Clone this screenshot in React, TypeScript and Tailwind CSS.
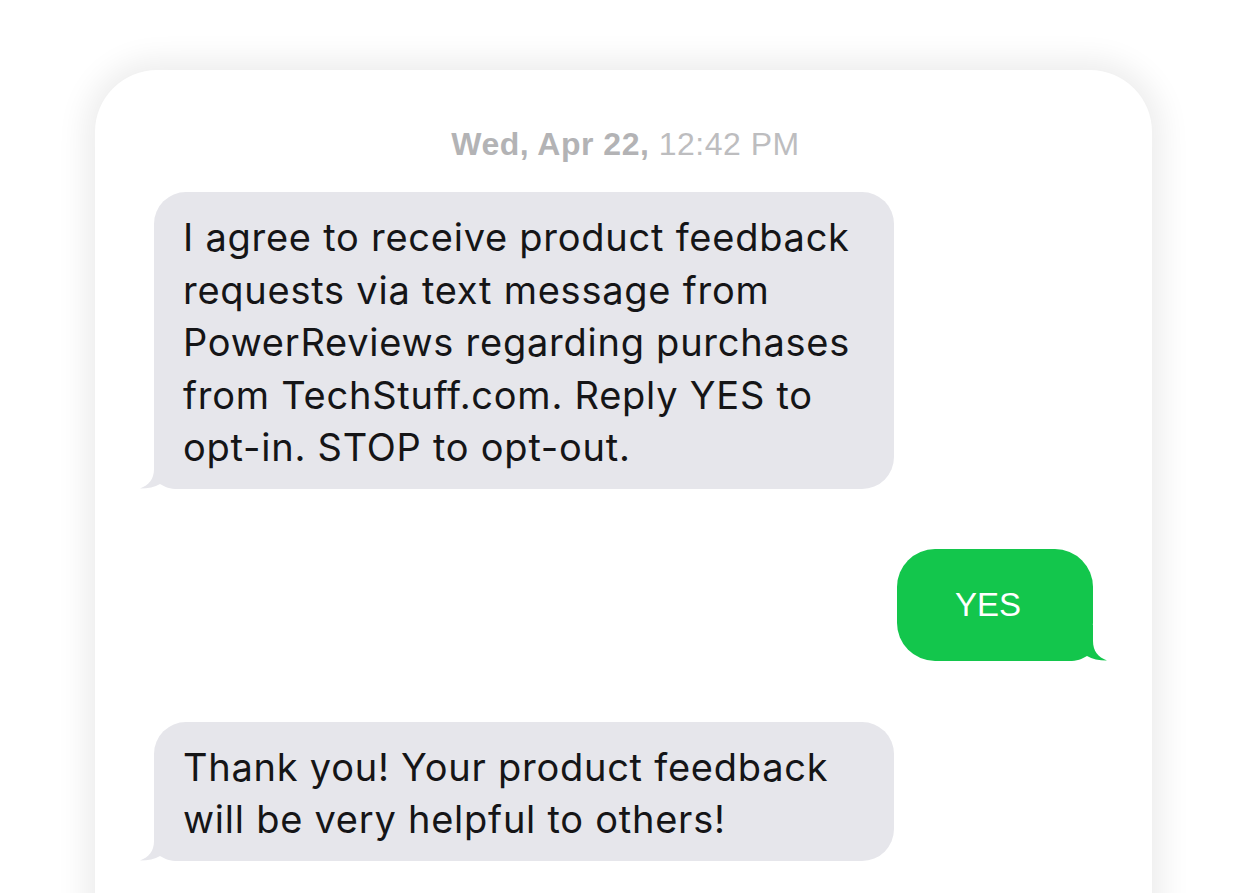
import React from "react";

function LeftTail({ color }: { color: string }) {
  return (
    <svg
      className="absolute left-[-14px] bottom-0"
      width="56"
      height="36"
      viewBox="0 0 56 36"
    >
      <path
        d="M14 0 L14 16 C14 26 9 32 0 35.5 C8 35.5 15 34 20 31 C25 34 30 36 38 36 L56 36 L56 0 Z"
        fill={color}
      />
    </svg>
  );
}

function RightTail({ color }: { color: string }) {
  return (
    <svg
      className="absolute right-[-14px] bottom-0"
      width="56"
      height="36"
      viewBox="0 0 56 36"
    >
      <path
        d="M42 0 L42 16 C42 26 47 32 56 35.5 C48 35.5 41 34 36 31 C31 34 26 36 18 36 L0 36 L0 0 Z"
        fill={color}
      />
    </svg>
  );
}

export default function App() {
  return (
    <div className="w-[1234px] h-[893px] bg-white overflow-hidden">
      <div className="pt-[70px] pl-[95px]">
        <div className="w-[1057px] h-[900px] bg-white rounded-[62px] shadow-[0_0_30px_10px_rgba(0,0,0,0.075)] pt-[56px] px-[59px] flex flex-col">
          <div
            className="text-center text-[32px] leading-[36px] tracking-[0.5px] pl-[4px]"
            style={{ fontFamily: '"Liberation Sans", Arial, sans-serif' }}
          >
            <span className="font-bold text-[#b3b3b5]">Wed, Apr 22,</span>{" "}
            <span className="text-[#bdbdbf]">12:42 PM</span>
          </div>

          <div
            className="mt-[30px] flex flex-col"
            style={{ fontFamily: "Inter, 'Noto Sans', sans-serif" }}
          >
            <div className="relative self-start w-[740px] rounded-[32px] bg-[#e6e6eb] pl-[29px] pr-[10px] pt-[19px] pb-[15px] text-[38px] leading-[52.5px] text-[#151517] tracking-[0.75px]">
              <LeftTail color="#e6e6eb" />
              <div className="relative whitespace-nowrap">
                I agree to receive product feedback
                <br />
                requests via text message from
                <br />
                PowerReviews regarding purchases
                <br />
                from TechStuff.com. Reply YES to
                <br />
                opt-in. STOP to opt-out.
              </div>
            </div>

            <div
              className="relative self-end mt-[60px] w-[196px] h-[112px] rounded-[38px] bg-[#13c64c] flex items-center justify-center text-white text-[33px] pr-[14px]"
              style={{ fontFamily: '"Liberation Sans", Arial, sans-serif' }}
            >
              <RightTail color="#13c64c" />
              <span className="relative">YES</span>
            </div>

            <div className="relative self-start mt-[61px] w-[740px] rounded-[32px] bg-[#e6e6eb] pl-[29px] pr-[10px] pt-[19px] pb-[15px] text-[38px] leading-[52.5px] text-[#151517] tracking-[0.75px]">
              <LeftTail color="#e6e6eb" />
              <div className="relative whitespace-nowrap">
                Thank you! Your product feedback
                <br />
                will be very helpful to others!
              </div>
            </div>
          </div>
        </div>
      </div>
    </div>
  );
}
